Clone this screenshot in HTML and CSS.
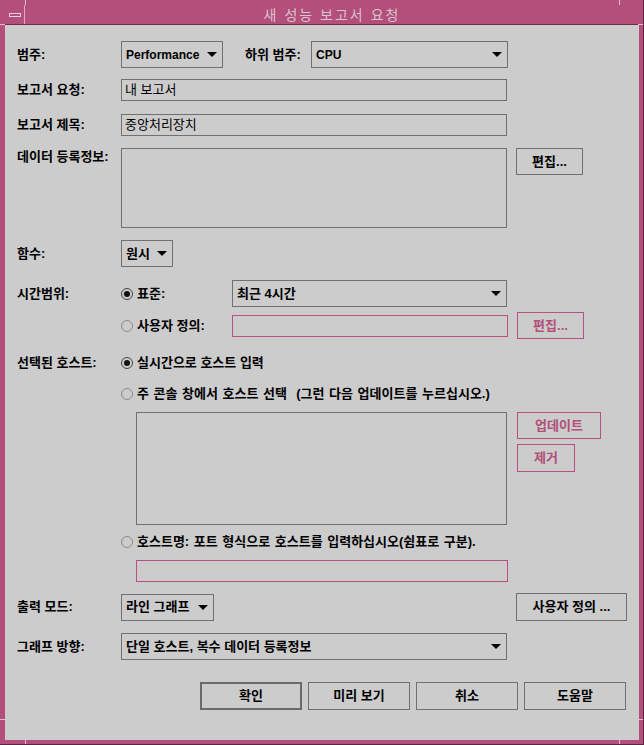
FILE: index.html
```html
<!DOCTYPE html>
<html lang="ko">
<head>
<meta charset="utf-8">
<title>새 성능 보고서 요청</title>
<link rel="stylesheet" href="styles.css">
</head>
<body>
<div class="window">
  <span class="mark mark-t1"></span><span class="mark mark-t2"></span>
  <span class="mark mark-b1"></span><span class="mark mark-b2"></span>
  <span class="mark mark-l1"></span><span class="mark mark-l2"></span>
  <span class="mark mark-r1"></span><span class="mark mark-r2"></span>
  <div class="titlebar">
    <div class="menu-btn"><span class="bar"></span></div>
    <div class="title">새 성능 보고서 요청</div>
  </div>
  <div class="content">
    <div class="row r1">
      <div class="lbl">범주:</div>
      <div class="dd w-perf lat">Performance</div>
      <div class="lbl lbl-sub">하위 범주:</div>
      <div class="dd w-cpu lat">CPU</div>
    </div>
    <div class="row r2">
      <div class="lbl">보고서 요청:</div>
      <div class="in w-full">내 보고서</div>
    </div>
    <div class="row r3">
      <div class="lbl">보고서 제목:</div>
      <div class="in w-full">중앙처리장치</div>
    </div>
    <div class="row r4 top">
      <div class="lbl lbl-top">데이터 등록정보:</div>
      <div class="area w-full"></div>
      <div class="btn w-edit">편집...</div>
    </div>
    <div class="row r5">
      <div class="lbl">함수:</div>
      <div class="dd w-func">원시</div>
    </div>
    <div class="row r6">
      <div class="lbl">시간범위:</div>
      <div class="radio-opt w-std"><span class="radio on"></span>표준:</div>
      <div class="dd w-time">최근 4시간</div>
    </div>
    <div class="row r7">
      <div class="lbl"></div>
      <div class="radio-opt w-std"><span class="radio"></span>사용자 정의:</div>
      <div class="in pink w-custom"></div>
      <div class="btn pink w-edit">편집...</div>
    </div>
    <div class="row r8">
      <div class="lbl">선택된 호스트:</div>
      <div class="radio-opt"><span class="radio on"></span>실시간으로 호스트 입력</div>
    </div>
    <div class="row r9">
      <div class="lbl"></div>
      <div class="radio-opt wide"><span class="radio"></span>주 콘솔 창에서 호스트 선택 &nbsp;(그런 다음 업데이트를 누르십시오.)</div>
    </div>
    <div class="row r10 top">
      <div class="hostlist"></div>
      <div class="btncol">
        <div class="btn pink w-upd">업데이트</div>
        <div class="btn pink w-rem">제거</div>
      </div>
    </div>
    <div class="row r11">
      <div class="lbl"></div>
      <div class="radio-opt wide"><span class="radio"></span>호스트명: 포트 형식으로 호스트를 입력하십시오(쉼표로 구분).</div>
    </div>
    <div class="row r12">
      <div class="in pink w-hostin"></div>
    </div>
    <div class="row r13">
      <div class="lbl">출력 모드:</div>
      <div class="dd w-mode">라인 그래프</div>
      <div class="spacer"></div>
      <div class="btn w-userdef">사용자 정의 ...</div>
    </div>
    <div class="row r14">
      <div class="lbl">그래프 방향:</div>
      <div class="dd w-full">단일 호스트, 복수 데이터 등록정보</div>
    </div>
    <div class="row r15">
      <div class="btn act default">확인</div>
      <div class="btn act">미리 보기</div>
      <div class="btn act">취소</div>
      <div class="btn act">도움말</div>
    </div>
  </div>
</div>
</body>
</html>
```

FILE: styles.css
```css
* { box-sizing: border-box; }
html, body { margin: 0; padding: 0; }
body {
  width: 644px;
  height: 745px;
  overflow: hidden;
  background: #cccccc;
  color: #000;
  font-family: "Liberation Sans", "Noto Sans CJK KR", sans-serif;
  font-size: 13px;
  line-height: 16px;
  white-space: nowrap;
}
.lat { font-size: 12px; }
.window {
  position: relative;
  width: 644px;
  height: 745px;
  background: #b24f7a;
  padding: 5px 4px 4px 5px;
  border-right: 1px solid #5c2642;
  border-bottom: 1px solid #5c2642;
  display: flex;
  flex-direction: column;
}
.mark { position: absolute; background: #e2bfd0; }
.mark-t1 { left: 25px; top: 0; width: 1px; height: 5px; }
.mark-t2 { left: 619px; top: 0; width: 1px; height: 5px; }
.mark-b1 { left: 25px; bottom: 0; width: 1px; height: 5px; }
.mark-b2 { left: 619px; bottom: 0; width: 1px; height: 5px; }
.mark-l1 { left: 0; top: 24px; width: 5px; height: 1px; }
.mark-l2 { left: 0; top: 719px; width: 5px; height: 1px; }
.mark-r1 { right: 0; top: 24px; width: 5px; height: 1px; }
.mark-r2 { right: 0; top: 719px; width: 5px; height: 1px; }

.titlebar {
  height: 20px;
  display: flex;
  border-bottom: 1px solid #6a2a47;
}
.menu-btn {
  width: 20px;
  height: 19px;
  border-right: 1px solid #dcaac2;
  display: flex;
  align-items: center;
  justify-content: center;
}
.menu-btn .bar {
  width: 12px;
  height: 4px;
  border: 1px solid #ecd0dd;
}
.title {
  flex: 1;
  text-align: center;
  color: #dcc3cf;
  font-family: "Noto Sans CJK KR", sans-serif;
  font-size: 14px;
  letter-spacing: 2px;
  line-height: 19px;
}
.content {
  flex: 1;
  background: #cccccc;
  padding-left: 12px;
}

.row { display: flex; align-items: center; }
.row.top { align-items: flex-start; }
.lbl { width: 104px; flex: none; font-weight: bold; }
.lbl-top { padding-top: 1px; }
.lbl-sub { width: 66px; margin-left: 22px; }

.dd {
  height: 27px;
  flex: none;
  border: 1px solid #707070;
  display: flex;
  align-items: center;
  justify-content: space-between;
  padding: 0 5px 0 4px;
  font-weight: bold;
}
.dd::after {
  content: "";
  flex: none;
  border-left: 5px solid transparent;
  border-right: 5px solid transparent;
  border-top: 5px solid #000;
  margin-left: 6px;
}
.in {
  height: 22px;
  flex: none;
  border: 1px solid #707070;
  padding-left: 3px;
  display: flex;
  align-items: center;
}
.area { height: 80px; border: 1px solid #707070; flex: none; }
.btn {
  flex: none;
  height: 27px;
  border: 1px solid #707070;
  display: flex;
  align-items: center;
  justify-content: center;
  font-weight: bold;
}
.pink { border-color: #b8517e; color: #b24f7a; }

.radio-opt { display: flex; align-items: center; font-weight: bold; flex: none; }
.radio-opt.wide { word-spacing: 1px; }
.radio {
  width: 12px;
  height: 12px;
  border-radius: 50%;
  border: 1px solid #8a8a8a;
  margin-right: 4px;
  display: flex;
  align-items: center;
  justify-content: center;
  flex: none;
}
.radio.on { border-color: #444; }
.radio.on::after {
  content: "";
  width: 6px;
  height: 6px;
  border-radius: 50%;
  background: #111;
}

.w-perf { width: 102px; }
.w-cpu { width: 197px; }
.w-full { width: 386px; }
.w-edit { width: 67px; margin-left: 9px; }
.w-func { width: 52px; }
.w-std { width: 111px; }
.w-time { width: 275px; }
.w-custom { width: 276px; }
.w-mode { width: 93px; }
.w-hostin { width: 372px; margin-left: 119px; }
.w-upd { width: 84px; }
.w-rem { width: 58px; height: 28px; }
.w-userdef { width: 111px; height: 28px; }
.spacer { width: 302px; flex: none; }

.r1 { margin-top: 16px; }
.r2 { margin-top: 11px; }
.r3 { margin-top: 13px; }
.r4 { margin-top: 12px; }
.r5 { margin-top: 12px; }
.r6 { margin-top: 13px; }
.r7 { margin-top: 5px; height: 27px; }
.r8 { margin-top: 16px; height: 16px; }
.r9 { margin-top: 15px; height: 16px; }
.r10 { margin-top: 10px; }
.r11 { margin-top: 9px; height: 16px; }
.r12 { margin-top: 10px; }
.r13 { margin-top: 11px; height: 28px; }
.r14 { margin-top: 12px; }
.r15 { margin-top: 22px; margin-left: 183px; gap: 6px; }

.hostlist {
  margin-left: 119px;
  width: 371px;
  height: 113px;
  border: 1px solid #707070;
  flex: none;
}
.btncol { margin-left: 10px; display: flex; flex-direction: column; gap: 5px; }

.act { width: 102px; height: 28px; }
.act.default { border: 2px solid #6a6a6a; }
```
